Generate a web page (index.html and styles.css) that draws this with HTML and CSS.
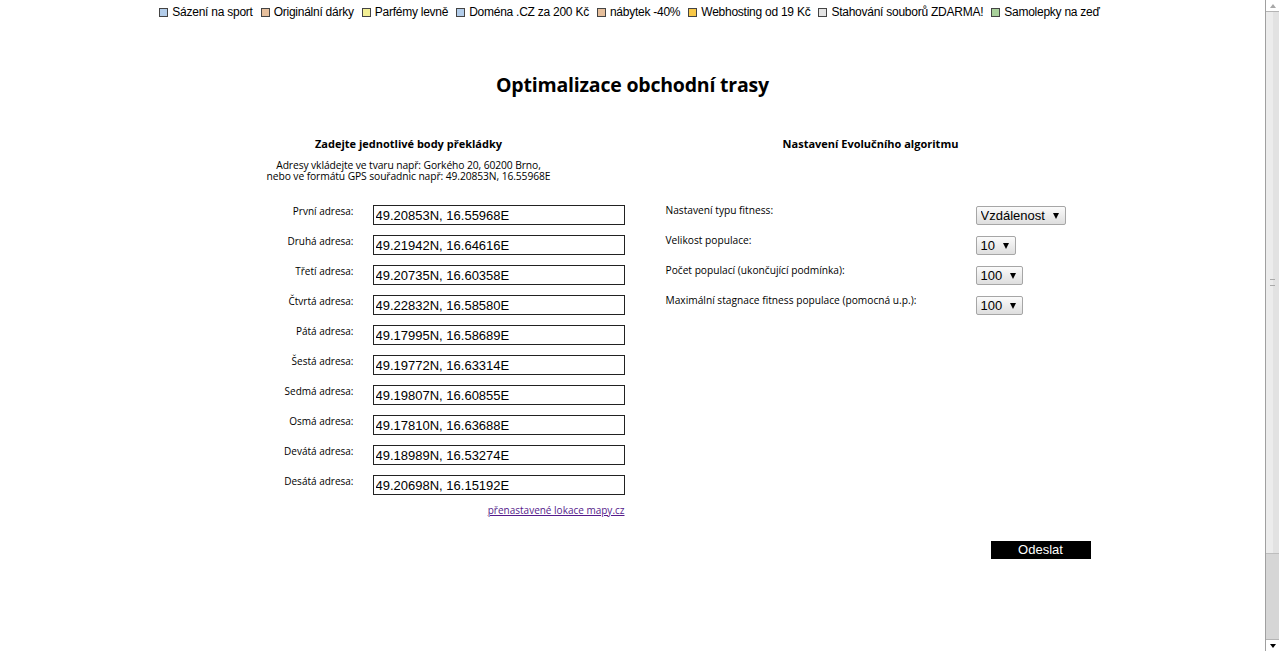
FILE: index.html
```html
<!DOCTYPE html>
<html lang="cs">
<head>
<meta charset="utf-8">
<title>Optimalizace obchodní trasy</title>
<link rel="stylesheet" href="styles.css">
</head>
<body>
<div class="page">
  <nav class="adbar">
    <a class="ad"><span class="sq sq-blue"></span>Sázení na sport</a>
    <a class="ad"><span class="sq sq-tan"></span>Originální dárky</a>
    <a class="ad"><span class="sq sq-yellow"></span>Parfémy levně</a>
    <a class="ad"><span class="sq sq-blue"></span>Doména .CZ za 200 Kč</a>
    <a class="ad"><span class="sq sq-tan"></span>nábytek -40%</a>
    <a class="ad"><span class="sq sq-orange"></span>Webhosting od 19 Kč</a>
    <a class="ad"><span class="sq sq-gray"></span>Stahování souborů ZDARMA!</a>
    <a class="ad"><span class="sq sq-green"></span>Samolepky na zeď</a>
  </nav>

  <h1 class="title">Optimalizace obchodní trasy</h1>

  <form class="form">
    <div class="columns">
      <section class="col col-left">
        <h2 class="col-title">Zadejte jednotlivé body překládky</h2>
        <p class="hint">Adresy vkládejte ve tvaru např: Gorkého 20, 60200 Brno,<br>nebo ve formátu GPS souřadnic např: 49.20853N, 16.55968E</p>
        <div class="addr-list">
          <div class="addr-row"><label class="addr-label">První adresa:</label><input class="addr-input" value="49.20853N, 16.55968E"></div>
          <div class="addr-row"><label class="addr-label">Druhá adresa:</label><input class="addr-input" value="49.21942N, 16.64616E"></div>
          <div class="addr-row"><label class="addr-label">Třetí adresa:</label><input class="addr-input" value="49.20735N, 16.60358E"></div>
          <div class="addr-row"><label class="addr-label">Čtvrtá adresa:</label><input class="addr-input" value="49.22832N, 16.58580E"></div>
          <div class="addr-row"><label class="addr-label">Pátá adresa:</label><input class="addr-input" value="49.17995N, 16.58689E"></div>
          <div class="addr-row"><label class="addr-label">Šestá adresa:</label><input class="addr-input" value="49.19772N, 16.63314E"></div>
          <div class="addr-row"><label class="addr-label">Sedmá adresa:</label><input class="addr-input" value="49.19807N, 16.60855E"></div>
          <div class="addr-row"><label class="addr-label">Osmá adresa:</label><input class="addr-input" value="49.17810N, 16.63688E"></div>
          <div class="addr-row"><label class="addr-label">Devátá adresa:</label><input class="addr-input" value="49.18989N, 16.53274E"></div>
          <div class="addr-row"><label class="addr-label">Desátá adresa:</label><input class="addr-input" value="49.20698N, 16.15192E"></div>
        </div>
        <div class="reset-row"><a class="reset-link" href="#">přenastavené lokace mapy.cz</a></div>
      </section>

      <section class="col col-right">
        <h2 class="col-title">Nastavení Evolučního algoritmu</h2>
        <div class="set-list">
          <div class="set-row"><label class="set-label">Nastavení typu fitness:</label><span class="sel"><select><option>Vzdálenost</option></select></span></div>
          <div class="set-row"><label class="set-label">Velikost populace:</label><span class="sel"><select><option>10</option></select></span></div>
          <div class="set-row"><label class="set-label">Počet populací (ukončující podmínka):</label><span class="sel"><select><option>100</option></select></span></div>
          <div class="set-row"><label class="set-label">Maximální stagnace fitness populace (pomocná u.p.):</label><span class="sel"><select><option>100</option></select></span></div>
        </div>
      </section>
    </div>
    <div class="submit-row"><button type="button" class="submit">Odeslat</button></div>
  </form>
</div>
<div class="scrollbar">
  <div class="sb-btn sb-up"></div>
  <div class="sb-thumb"><span class="grip"></span></div>
  <div class="sb-track"></div>
  <div class="sb-btn sb-down"></div>
</div>
</body>
</html>
```

FILE: styles.css
```css
html, body {
  margin: 0;
  padding: 0;
  height: 100%;
}
body {
  display: flex;
  background: #fff;
  color: #000;
  font-family: "Open Sans", "DejaVu Sans", sans-serif;
  overflow: hidden;
}
.page {
  flex: 1;
  min-width: 0;
}

/* top ad bar */
.adbar {
  display: flex;
  justify-content: center;
  padding-top: 4px;
  padding-right: 6px;
  height: 16px;
  font-family: "Liberation Sans", Arial, sans-serif;
  font-size: 12px;
  letter-spacing: -0.25px;
  line-height: 14px;
}
.ad {
  display: flex;
  align-items: center;
  color: #000;
  margin: 0 4px;
  white-space: nowrap;
}
.sq {
  display: inline-block;
  width: 7px;
  height: 7px;
  border: 1px solid #444;
  margin-right: 4px;
}
.sq-blue { background: #b3cdea; }
.sq-tan { background: #e6bf9c; }
.sq-yellow { background: #f2ef95; }
.sq-orange { background: #f8c848; }
.sq-gray { background: #e4e4e4; }
.sq-green { background: #a8d09a; }

.title {
  margin: 52px 0 0;
  text-align: center;
  font-size: 19.5px;
  font-weight: bold;
  line-height: 26px;
  letter-spacing: -0.2px;
}

.form {
  width: 924px;
  margin: 39px auto 0;
}
.columns {
  display: flex;
}
.col-left { width: 476px; }
.col-right { width: 448px; }
.col-title {
  margin: 0;
  text-align: center;
  font-size: 11px;
  font-weight: bold;
  line-height: 14px;
}
.hint {
  margin: 9px 0 0;
  text-align: center;
  font-size: 10.3px;
  line-height: 11px;
  letter-spacing: -0.1px;
}

.addr-list {
  margin-top: 23px;
  display: flex;
  flex-direction: column;
  gap: 10px;
}
.addr-row {
  display: flex;
  align-items: flex-start;
}
.addr-label {
  width: 183px;
  text-align: right;
  font-size: 10px;
  line-height: 12px;
  padding-right: 19px;
  flex-shrink: 0;
}
.addr-input {
  box-sizing: border-box;
  width: 252px;
  height: 20px;
  margin: 0;
  border: 1px solid #222;
  padding: 1px 2px 0;
  font-family: "Liberation Sans", Arial, sans-serif;
  font-size: 13px;
  color: #000;
  outline: none;
}
.reset-row {
  width: 454px;
  text-align: right;
  margin-top: 2px;
}
.reset-link {
  color: #551a8b;
  font-size: 10px;
}

.set-list {
  margin-top: 52px;
  display: flex;
  flex-direction: column;
  gap: 8px;
}
.set-row {
  display: flex;
  align-items: flex-start;
  padding-left: 19px;
}
.set-label {
  width: 310px;
  flex-shrink: 0;
  font-size: 10.2px;
  line-height: 12px;
  padding-top: 1px;
}
.sel {
  position: relative;
  display: inline-flex;
  margin-top: 3px;
}
.sel select {
  appearance: none;
  -webkit-appearance: none;
  height: 19px;
  margin: 0;
  padding: 0 19px 0 4px;
  border: 1px solid #a6a6a6;
  border-radius: 2px;
  background: linear-gradient(#fbfbfb, #dedede);
  font-family: "Liberation Sans", Arial, sans-serif;
  font-size: 13px;
  color: #000;
}
.sel::after {
  content: "";
  position: absolute;
  right: 7px;
  top: 7px;
  border-left: 3.5px solid transparent;
  border-right: 3.5px solid transparent;
  border-top: 6px solid #000;
  pointer-events: none;
}

.submit-row {
  display: flex;
  justify-content: flex-end;
  margin-top: 22px;
  padding-right: 4px;
}
.submit {
  width: 100px;
  height: 18px;
  background: #000;
  color: #fff;
  border: none;
  font-family: "Liberation Sans", Arial, sans-serif;
  font-size: 13px;
  padding: 0;
  line-height: 18px;
}

/* fake browser scrollbar */
.scrollbar {
  width: 13px;
  height: 651px;
  border-left: 1px solid #a0a0a0;
  background: #fff;
  display: flex;
  flex-direction: column;
}
.sb-btn {
  height: 11px;
  display: flex;
  justify-content: center;
  align-items: center;
}
.sb-up { border-bottom: 1px solid #b4b4b4; }
.sb-up::before {
  content: "";
  border-left: 3.5px solid transparent;
  border-right: 3.5px solid transparent;
  border-bottom: 4px solid #a8a8a8;
}
.sb-down { border-top: 1px solid #b4b4b4; }
.sb-down::before {
  content: "";
  border-left: 3.5px solid transparent;
  border-right: 3.5px solid transparent;
  border-top: 4px solid #000;
}
.sb-thumb {
  height: 541px;
  background: linear-gradient(to right, #ececec 0, #ececec 7px, #e2e2e2 7px);
  border-bottom: 1px solid #bdbdbd;
  display: flex;
  justify-content: center;
  align-items: center;
}
.grip {
  width: 5px;
  height: 5px;
  border-top: 1px solid #aaa;
  border-bottom: 1px solid #aaa;
}
.sb-track {
  flex: 1;
  background: #d6d6d6;
}
```
